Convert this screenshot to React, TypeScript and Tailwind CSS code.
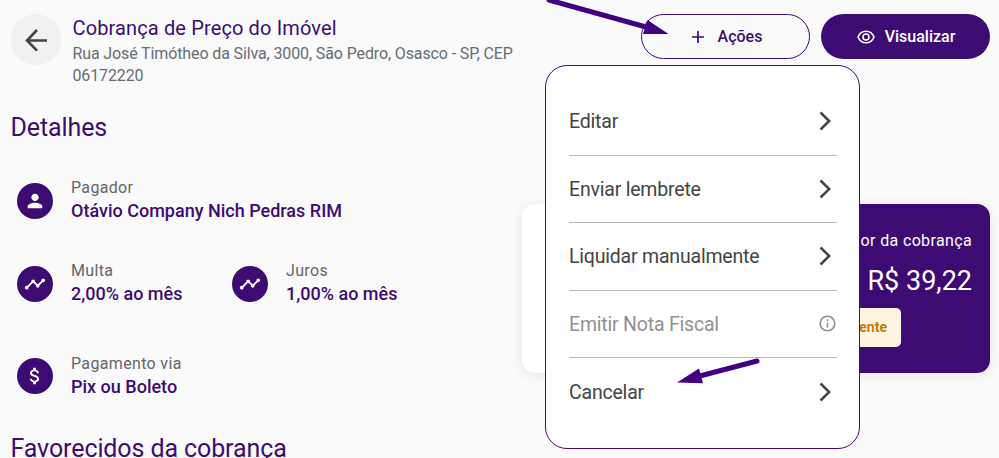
import type { ReactNode } from "react";

function InfoItem({ icon, label, value, className = "", textClass = "-mt-1" }: { icon: ReactNode; label: string; value: string; className?: string; textClass?: string }) {
  return (
    <div className={`flex h-[42px] items-center ${className}`}>
      <div className="flex size-9 shrink-0 items-center justify-center rounded-full bg-[#3d0c72] text-white">{icon}</div>
      <div className={`ml-[18px] whitespace-nowrap ${textClass}`}>
        <div className="h-[23px] text-[16px] leading-[23px] tracking-[0.34px] text-[#666]">{label}</div>
        <div className="h-[23px] text-[18px] leading-[23px] font-medium text-[#3d0c72]">{value}</div>
      </div>
    </div>
  );
}

const PersonIcon = () => (
  <svg width="22" height="22" viewBox="0 0 24 24" fill="currentColor">
    <path d="M12 12c2.21 0 4-1.79 4-4s-1.79-4-4-4-4 1.79-4 4 1.79 4 4 4zm0 2c-2.67 0-8 1.34-8 4v2h16v-2c0-2.66-5.33-4-8-4z" />
  </svg>
);

const TimelineIcon = () => (
  <svg width="22" height="22" viewBox="0 0 24 24" fill="currentColor">
    <path d="M23 8c0 1.1-.9 2-2 2-.18 0-.35-.02-.51-.07l-3.56 3.55c.05.16.07.34.07.52 0 1.1-.9 2-2 2s-2-.9-2-2c0-.18.02-.36.07-.52l-2.55-2.55c-.16.05-.34.07-.52.07s-.36-.02-.52-.07l-4.55 4.56c.05.16.07.33.07.51 0 1.1-.9 2-2 2s-2-.9-2-2 .9-2 2-2c.18 0 .35.02.51.07l4.56-4.55C8.02 9.36 8 9.18 8 9c0-1.1.9-2 2-2s2 .9 2 2c0 .18-.02.36-.07.52l2.55 2.55c.16-.05.34-.07.52-.07s.36.02.52.07l3.55-3.56C19.02 8.35 19 8.18 19 8c0-1.1.9-2 2-2s2 .9 2 2z" />
  </svg>
);

const DollarIcon = () => (
  <svg width="22" height="22" viewBox="0 0 24 24" fill="currentColor">
    <path d="M11.8 10.9c-2.27-.59-3-1.2-3-2.15 0-1.09 1.01-1.85 2.7-1.85 1.78 0 2.44.85 2.5 2.1h2.21c-.07-1.72-1.12-3.3-3.21-3.81V3h-3v2.16c-1.94.42-3.5 1.68-3.5 3.61 0 2.31 1.91 3.46 4.7 4.13 2.5.6 3 1.48 3 2.41 0 .69-.49 1.79-2.7 1.79-2.06 0-2.87-.92-2.98-2.1h-2.2c.12 2.19 1.76 3.42 3.68 3.83V21h3v-2.15c1.95-.37 3.5-1.5 3.5-3.55 0-2.84-2.43-3.81-4.7-4.4z" />
  </svg>
);

const Chevron = () => (
  <svg className="mr-[5px]" width="13" height="20" viewBox="0 0 13 20" fill="none" stroke="#444" strokeWidth="2.5">
    <path d="M1.500 1.500 10.200 10 1.500 18.500" />
  </svg>
);

const InfoIcon = () => (
  <svg className="mr-px" width="17" height="17" viewBox="0 0 17 17" fill="none" stroke="#919191" strokeWidth="1.6">
    <circle cx="8.5" cy="8.5" r="7.3" />
    <path d="M8.5 7.5v5M8.5 4.3v1.7" />
  </svg>
);

const menuItems = ["Editar", "Enviar lembrete", "Liquidar manualmente", "Emitir Nota Fiscal", "Cancelar"];

function ActionsMenu() {
  return (
    <div className="absolute top-[65px] left-[545px] h-[384px] w-[315px] rounded-[22px] border border-[#4a0478] bg-white pt-[22px] pr-[22px] pl-[23px]">
      {menuItems.map((item, i) => {
        const disabled = i === 3;
        return (
          <div
            key={item}
            className={`flex h-[67.5px] items-center justify-between text-[19.5px] tracking-[-0.2px] ${i < 4 ? "border-b border-[#b8bbbe]" : ""} ${disabled ? "text-[#919191]" : "text-[#444]"}`}
          >
            <span className="pt-px whitespace-nowrap">{item}</span>
            {disabled ? <InfoIcon /> : <Chevron />}
          </div>
        );
      })}
    </div>
  );
}

export default function App() {
  return (
    <div className="relative h-[458px] w-[999px] overflow-hidden bg-[#fafafa] font-['Roboto',sans-serif]">
      <header className="flex h-[100px] items-start pt-[14px] pr-[9px] pl-[11px]">
        <button className="flex h-[51px] w-[50px] shrink-0 items-center justify-center rounded-full bg-[#f0f1f3]">
          <svg width="24" height="24" viewBox="0 0 24 24" fill="none" stroke="#444" strokeWidth="2.6">
            <path d="M23 12.500H3.200M13 2 3 12.500l10 10.200" />
          </svg>
        </button>
        <div className="ml-[11.5px] w-[460px] pt-0.5">
          <h1 className="text-[20px] leading-6 tracking-[0.13px] text-[#3d0c72]">Cobrança de Preço do Imóvel</h1>
          <p className="pt-[3px] text-[16px] leading-[22px] tracking-[-0.12px] text-[#666d75]">Rua José Timótheo da Silva, 3000, São Pedro, Osasco - SP, CEP 06172220</p>
        </div>
        <div className="ml-auto flex gap-[11px]">
          <button className="flex h-[45px] w-[169px] items-center justify-center gap-[14px] rounded-full border border-[#3d0c72] pl-[3px] text-[16px] font-medium text-[#3d0c72]">
            <svg width="12" height="12" viewBox="0 0 12 12" stroke="currentColor" strokeWidth="1.7">
              <path d="M6 0v12M0 6h12" />
            </svg>
            Ações
          </button>
          <button className="flex h-[45px] w-[169px] items-center justify-center gap-[10px] rounded-full bg-[#3d0c72] pl-px text-[16px] font-medium text-white">
            <svg width="18" height="14" viewBox="0 0 18 14" fill="none" stroke="currentColor" strokeWidth="1.6">
              <path d="M1 7C2.5 3.3 5.4 1.2 9 1.2S15.500 3.300 17 7c-1.500 3.700-4.400 5.800-8 5.800S2.500 10.700 1 7Z" />
              <circle cx="9" cy="7" r="3" />
            </svg>
            Visualizar
          </button>
        </div>
      </header>

      <main className="flex pr-[9px] pl-[11px]">
        <section className="w-[511px] shrink-0">
          <h2 className="-ml-[0.5px] pt-[13px] text-[25px] leading-[30px] tracking-[-0.1px] text-[#3d0c72]">Detalhes</h2>
          <div className="pt-[37px] pl-[6px]">
            <InfoItem icon={<PersonIcon />} label="Pagador" value="Otávio Company Nich Pedras RIM" />
            <div className="mt-[41px] flex">
              <InfoItem className="w-[215px]" icon={<TimelineIcon />} label="Multa" value="2,00% ao mês" />
              <InfoItem icon={<TimelineIcon />} label="Juros" value="1,00% ao mês" />
            </div>
            <InfoItem className="mt-[50px]" textClass="-mt-0.5" icon={<DollarIcon />} label="Pagamento via" value="Pix ou Boleto" />
          </div>
          <h2 className="mt-[37px] -ml-[0.5px] text-[25px] leading-[30px] tracking-[-0.1px] text-[#3d0c72]">Favorecidos da cobrança</h2>
        </section>

        <section className="mt-[104px] flex h-[169px] w-[468px] rounded-[13px] bg-white shadow-[0_2px_12px_rgba(0,0,0,0.09)]">
          <div className="ml-auto flex w-[234px] flex-col rounded-[13px] bg-[#3d0c72] pr-[18px] text-white">
            <div className="mt-[26px] self-end text-[16px] leading-[22px] tracking-[0.36px]">Valor da cobrança</div>
            <div className="mt-[13px] self-end text-[27px] leading-8">R$ 39,22</div>
            <div className="mt-[11px] ml-[46px] flex h-[39px] w-[99px] items-center justify-end rounded-[5px] bg-[#fff4e3] pr-[14px] text-[14px] font-bold text-[#c27b0a]">
              Pendente
            </div>
          </div>
        </section>
      </main>

      <ActionsMenu />

      <svg className="pointer-events-none absolute inset-0" width="999" height="458" viewBox="0 0 999 458" fill="#430080" stroke="#430080" strokeLinecap="round">
        <path d="M549 0 646 27" strokeWidth="5" />
        <path d="m647.500 20 21 14-25.500 0Z" stroke="none" />
        <path d="M757 361 696 377" strokeWidth="5" />
        <path d="m699 368.500-22 14 26 .8Z" stroke="none" />
      </svg>
    </div>
  );
}
